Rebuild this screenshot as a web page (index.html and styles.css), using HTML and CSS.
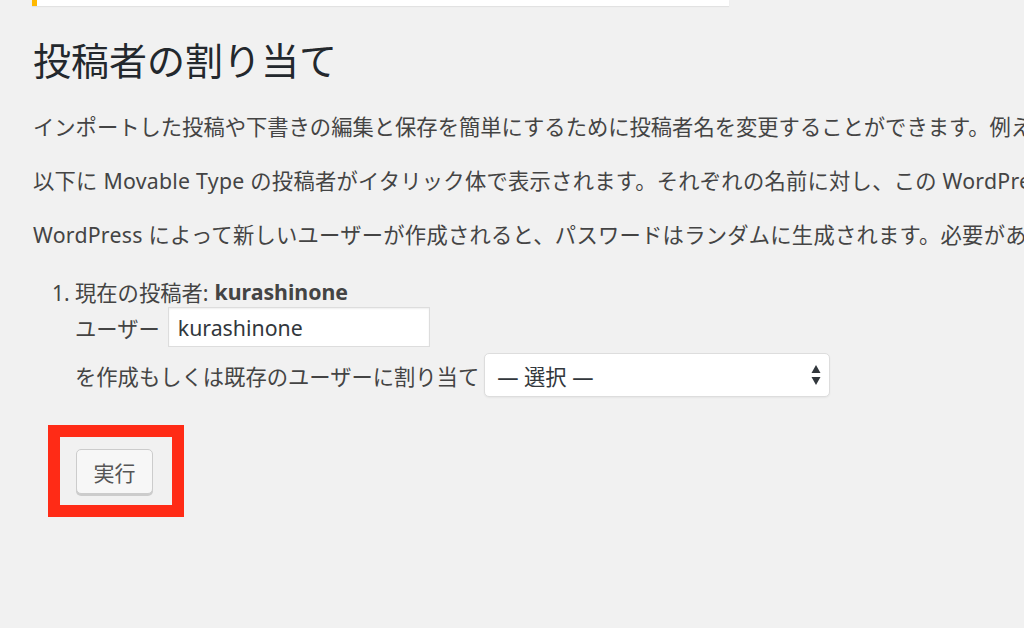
FILE: index.html
```html
<!DOCTYPE html>
<html lang="ja">
<head>
<meta charset="utf-8">
<title>投稿者の割り当て</title>
<link rel="stylesheet" href="styles.css">
</head>
<body>
<div class="notice"></div>
<div class="wrap">
  <h2 class="title">投稿者の割り当て</h2>
  <p class="desc">インポートした投稿や下書きの編集と保存を簡単にするために投稿者名を変更することができます。例えば、インポートした投稿者名を既存のユーザー名に変更できます。</p>
  <p class="desc">以下に Movable Type の投稿者がイタリック体で表示されます。それぞれの名前に対し、この WordPress サイトのユーザーを選択してください。</p>
  <p class="desc">WordPress によって新しいユーザーが作成されると、パスワードはランダムに生成されます。必要があれば後で変更してください。</p>
  <ol class="authors">
    <li class="author">
      <div class="row row-current">現在の投稿者: <strong class="name">kurashinone</strong></div>
      <div class="row row-user">ユーザー <span class="input">kurashinone</span></div>
      <div class="row row-assign">を作成もしくは既存のユーザーに割り当て<span class="select"><span class="select-text">— 選択 —</span><svg class="arrows" width="10" height="22" viewBox="0 0 10 22"><path d="M5 1 L9.5 9 L0.5 9 Z" fill="#32373c"/><path d="M0.5 13 L9.5 13 L5 21 Z" fill="#32373c"/></svg></span></div>
    </li>
  </ol>
  <div class="submit"><span class="button">実行</span></div>
</div>
<div class="highlight"></div>
</body>
</html>
```
FILE: styles.css
```css
html, body {
  margin: 0;
  padding: 0;
  background: #f1f1f1;
}
body {
  font-family: "Noto Sans", "Noto Sans CJK JP", sans-serif;
  color: #444;
  width: 1024px;
  height: 628px;
  overflow: hidden;
  position: relative;
}
.notice {
  margin-left: 32px;
  width: 692px;
  height: 6px;
  background: #fff;
  border-left: 5px solid #ffb900;
  box-shadow: 0 1px 1px rgba(0,0,0,0.06);
}
.wrap {
  padding-left: 33px;
}
.title {
  margin: 30px 0 0;
  font-size: 38px;
  line-height: 48px;
  font-weight: 400;
  color: #23282d;
  white-space: nowrap;
}
.desc {
  margin: 22px 0 0;
  font-size: 21.3px;
  line-height: 32px;
  white-space: nowrap;
}
.desc:first-of-type {
  margin-top: 27px;
}
.desc + .desc {
  letter-spacing: 0.25px;
}
.authors {
  margin: 24px 0 0;
  padding-left: 42px;
  font-size: 21.3px;
}
.author::marker {
  font-size: 21px;
}
.row {
  display: flex;
  align-items: center;
  white-space: nowrap;
}
.row-current {
  height: 32px;
}
.name {
  font-weight: 700;
  color: #444;
  margin-left: 6px;
}
.row-user {
  height: 40px;
}
.input {
  margin-left: 8px;
  box-sizing: border-box;
  width: 262px;
  height: 40px;
  border: 1px solid #ddd;
  background: #fff;
  box-shadow: inset 0 1px 2px rgba(0,0,0,0.07);
  padding-left: 9px;
  display: flex;
  align-items: center;
  color: #32373c;
}
.row-assign {
  margin-top: 6px;
  height: 44px;
}
.select {
  margin-left: 5px;
  box-sizing: border-box;
  width: 346px;
  height: 44px;
  border: 1px solid #ddd;
  border-radius: 5px;
  background: #fff;
  box-shadow: 0 1px 2px rgba(0,0,0,0.05);
  display: flex;
  align-items: center;
  justify-content: space-between;
  padding: 0 8px 0 12px;
  color: #32373c;
}
.arrows {
  display: block;
}
.submit {
  margin: 52px 0 0 43px;
}
.button {
  box-sizing: border-box;
  display: flex;
  align-items: center;
  justify-content: center;
  width: 77px;
  height: 45px;
  background: #f7f7f7;
  border: 1px solid #ccc;
  border-radius: 5px;
  box-shadow: 0 2px 0 #ccc;
  font-size: 21px;
  color: #555;
}
.highlight {
  position: absolute;
  left: 48px;
  top: 425px;
  width: 136px;
  height: 92px;
  box-sizing: border-box;
  border: 12px solid #ff2b16;
}
```
